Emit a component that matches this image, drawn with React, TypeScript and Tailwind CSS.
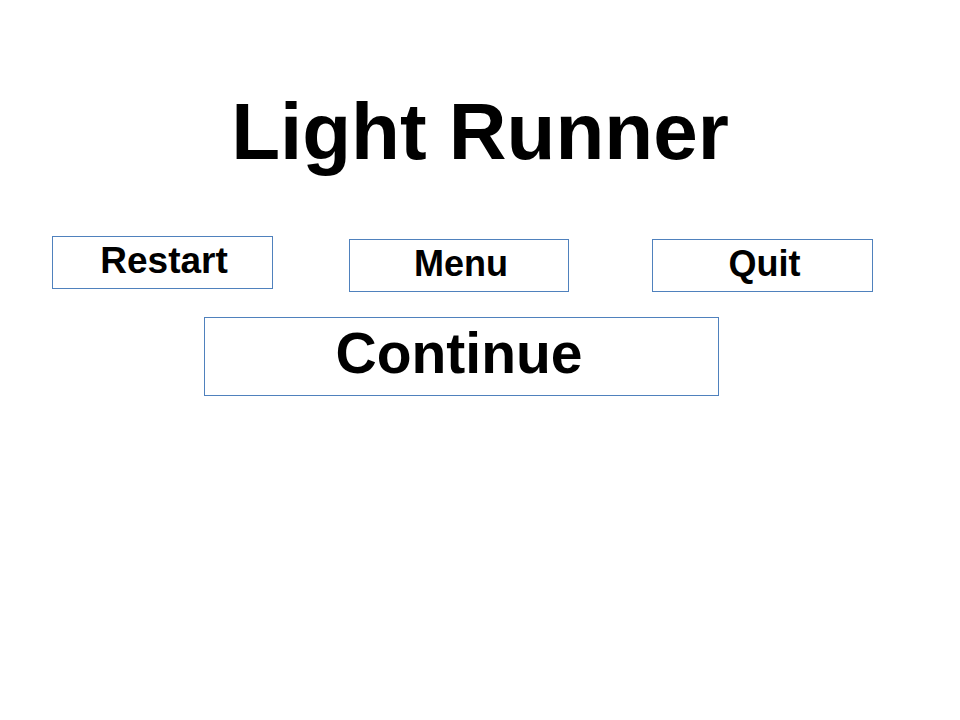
const buttonBox = 'flex items-center justify-center border border-[#4f81bd] bg-white text-black font-bold';

export default function App() {
  return (
    <div className="w-[960px] h-[720px] bg-white font-['Liberation_Sans',Arial,sans-serif] text-black">
      {/* titulo */}
      <div className="pt-[92px] text-center">
        <h1 className="text-[80px] leading-[80px] font-bold">Light Runner</h1>
      </div>

      {/* fila de botones */}
      <div className="mt-[64px] flex items-start pl-[52px]">
        <div className={`${buttonBox} w-[221px] h-[53px] text-[37px] pb-[4px] pl-[3px]`}>Restart</div>
        <div className={`${buttonBox} ml-[76px] mt-[3px] w-[220px] h-[53px] text-[36px] pb-[3px] pl-[4px]`}>Menu</div>
        <div className={`${buttonBox} ml-[83px] mt-[3px] w-[221px] h-[53px] text-[36px] pb-[3px] pl-[4px]`}>Quit</div>
      </div>

      <div className="mt-[25px] pl-[204px]">
        <div className={`${buttonBox} w-[515px] h-[79px] text-[57px] pb-[5px] pr-[5px]`}>Continue</div>
      </div>
    </div>
  );
}
